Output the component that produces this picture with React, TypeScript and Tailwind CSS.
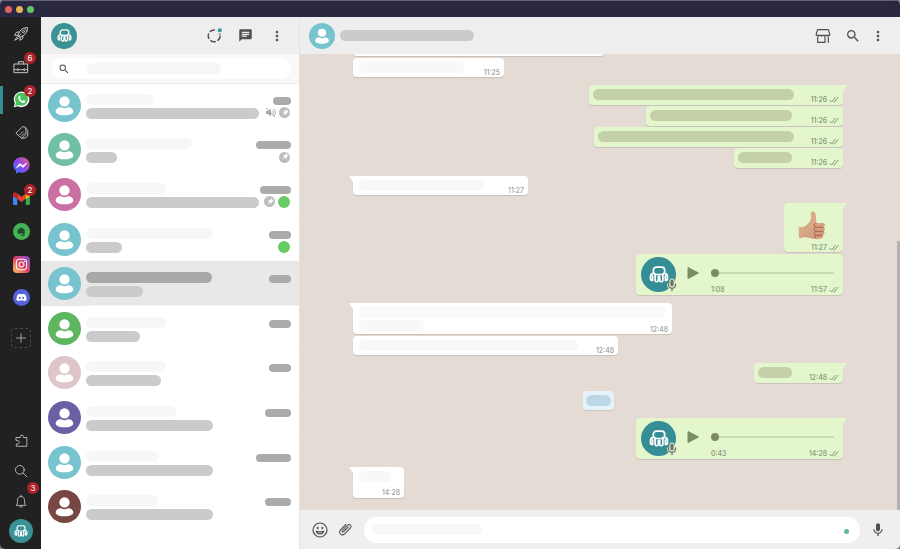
import type { ReactNode } from "react";
import { MdChat, MdMic, MdMoreVert, MdPushPin, MdSearch } from "react-icons/md";
import { FaDiscord, FaEvernote, FaFacebookMessenger, FaInstagram } from "react-icons/fa";

function Octopus({ className }: { className: string }) {
  return (
    <svg viewBox="0 0 28 24" className={className} fill="none" stroke="currentColor" strokeWidth="2.400" strokeLinecap="round" strokeLinejoin="round" aria-hidden="true">
      <rect x="6" y="1.500" width="16" height="10.500" rx="4.500" />
      <path d="M8.500 12v8c0 3 4.500 3 4.500 0v-5.500h2V20c0 3 4.500 3 4.500 0v-8" />
      <path d="M5.500 10.500C3.500 11 2 12.500 2 15v2.500c0 2 1.500 3 3 3V14M22.500 10.500c2 .5 3.500 2 3.500 4.500v2.500c0 2-1.500 3-3 3V14" />
    </svg>
  );
}

function Person({ className }: { className: string }) {
  return (
    <svg viewBox="0 0 32 32" className={className} aria-hidden="true">
      <circle cx="16" cy="16" r="16" fill="currentColor" />
      <circle cx="16" cy="12" r="5" fill="#fff" />
      <path d="M7.500 21.700c0-2.600 3-4.200 5.200-4 2 1.400 4.600 1.400 6.600 0 2.200-.2 5.200 1.400 5.200 4 0 5-17 5-17 0Z" fill="#fff" />
    </svg>
  );
}

function Line({ children, className = "size-4" }: { children: ReactNode; className?: string }) {
  return (
    <svg viewBox="0 0 24 24" className={className} fill="none" stroke="currentColor" strokeWidth="1.5" strokeLinecap="round" strokeLinejoin="round" aria-hidden="true">
      {children}
    </svg>
  );
}

type App = { name: string; icon: ReactNode; count?: number; active?: boolean };

const apps: App[] = [
  {
    name: "Launch",
    icon: (
      <Line>
        <path d="M21.500 2.500c-5-.5-9 1.500-12 6.500l-2 5 3 3 5-2.500c4.500-3 6.500-7 6-12Z" />
        <path d="M9.500 9 5 9.500 2.500 14l5 0M15 14.500l-.5 4.500-4 2.500v-4.500M6 16.500l-3.500 5L8 18.500M12 12l-5 5M17 4l3.500 3.500" />
        <circle cx="15.500" cy="8.500" r="1.800" />
      </Line>
    ),
  },
  {
    name: "Work",
    count: 6,
    icon: (
      <Line>
        <path d="M2 7.500h20v13H2zM8 7.500V4h8v3.500M2 16h4M9 16h6M18 16h4M6.500 14.500 9 16l-2.500 1.500M17.500 14.500 15 16l2.500 1.500" />
      </Line>
    ),
  },
  {
    name: "WhatsApp",
    count: 2,
    active: true,
    icon: (
      <svg viewBox="0 0 24 24" className="size-[17px]" aria-hidden="true">
        <path d="M1 23l1.600-5.800A11 11 0 1 1 7 21.500Z" fill="#fff" />
        <path d="M3 21l1.200-4.400A9.200 9.200 0 1 1 7.600 19.700Z" fill="#4cc35a" />
        <path d="M8.200 7c.7-.7 1.400-.6 1.700.2l.7 1.600c.2.700-.9 1.500-.8 1.800.7 1.600 2 2.800 3.700 3.500.5.100 1.200-1.300 1.800-1.100l1.800.9c.7.400.2 1.800-.5 2.400-3.600 2.700-11.200-4.500-8.400-9.300Z" fill="#fff" />
      </svg>
    ),
  },
  {
    name: "Tags",
    icon: (
      <Line className="size-[15px]">
        <path d="M13.500 3 3 13l9.500 8.500L19 15V4.500Z" />
        <path d="M19 5.500 22 9v8.500L17.500 21h-5M9.500 15.500l5-5M12 18l4.500-4.500" />
      </Line>
    ),
  },
  {
    name: "Messenger",
    icon: (
      <span className="relative flex size-[17px] items-center justify-center">
        <svg viewBox="0 0 24 24" className="absolute size-[17px]" aria-hidden="true">
          <defs>
            <linearGradient id="messenger" x1="0" y1="1" x2="1" y2="0">
              <stop offset="0" stopColor="#2585f5" />
              <stop offset=".5" stopColor="#8a45ee" />
              <stop offset="1" stopColor="#f4627a" />
            </linearGradient>
          </defs>
          <path d="M12 .5C5.500.5.500 5.200.500 11.500c0 3.500 1.500 6 3.700 8v4l3.500-1.800c1.400.4 2.800.6 4.300.6 6.500 0 11.500-4.700 11.500-11S18.500.5 12 .5Z" fill="url(#messenger)" />
          <path d="m5 15 4.500-6 4 3 5.500-3.200-4.500 6-4-3Z" fill="#fff" stroke="#fff" strokeLinejoin="round" />
        </svg>
      </span>
    ),
  },
  {
    name: "Gmail",
    count: 2,
    icon: (
      <svg viewBox="0 0 24 18" className="w-[17px] h-[13px]" aria-hidden="true">
        <path d="M0 3v13.500c0 .8.600 1.500 1.500 1.500H6V7Z" fill="#4285f4" />
        <path d="M24 3v13.500c0 .8-.6 1.500-1.500 1.500H18V7Z" fill="#34a853" />
        <path d="M6 9.500V2l6 4.500L18 2v7.500L12 14Z" fill="#ea4335" />
        <path d="M0 3v2.500l6 4.500V2L4 .6C2.300-.6 0 .6 0 3Z" fill="#c5221f" />
        <path d="M24 3v2.500L18 10V2l2-1.400C21.700-.6 24 .6 24 3Z" fill="#fbbc04" />
      </svg>
    ),
  },
  {
    name: "Evernote",
    icon: (
      <span className="flex size-[17px] items-center justify-center rounded-full bg-[#45b455] text-[#1f4a2a]">
        <FaEvernote className="size-[10px]" />
      </span>
    ),
  },
  {
    name: "Instagram",
    icon: (
      <span className="flex size-[17px] items-center justify-center rounded-[4px] bg-linear-to-tr from-[#fdc04d] via-[#e43b63] to-[#7a3fd0] text-white">
        <FaInstagram className="size-[13px]" />
      </span>
    ),
  },
  {
    name: "Discord",
    icon: (
      <span className="flex size-[17px] items-center justify-center rounded-full bg-[#5561dd] text-white">
        <FaDiscord className="size-[11px]" />
      </span>
    ),
  },
];

function Badge({ count, className }: { count: number; className: string }) {
  return (
    <span className={`absolute flex size-3 items-center justify-center rounded-full bg-[#ae2328] text-[8px] leading-none text-white ${className}`}>
      {count}
    </span>
  );
}

function Sidebar() {
  return (
    <nav className="flex w-[41px] shrink-0 flex-col items-center bg-[#212121] pb-[3px] text-[#c4c4c4]">
      {apps.map((app) => (
        <button key={app.name} aria-label={app.name} className="relative flex h-[33px] w-full items-center justify-center pl-px">
          {app.active && <span className="absolute left-0 h-7 w-[3px] bg-[#368f94]" />}
          {app.icon}
          {app.count && <Badge count={app.count} className="right-[5px] top-[2px]" />}
        </button>
      ))}
      <button aria-label="Add app" className="mt-[14px] flex size-5 items-center justify-center rounded-sm border border-dashed border-[#4a4a4a]">
        <Line className="size-3"><path d="M12 3v18M3 12h18" /></Line>
      </button>
      <div className="mt-auto flex w-full flex-col">
        <button aria-label="Extensions" className="flex h-[30px] items-center justify-center">
          <Line className="size-[14px]">
            <path d="M4 6h7V4c0-3 5-3 5 0v2h6v15H4v-4h2c4 0 4-6 0-6H4Z" />
          </Line>
        </button>
        <button aria-label="Search apps" className="flex h-[30px] items-center justify-center">
          <Line className="size-[14px]"><circle cx="10" cy="10" r="7.500" /><path d="m15.500 15.500 6.500 6.500" /></Line>
        </button>
        <button aria-label="Notifications" className="relative flex h-[30px] items-center justify-center">
          <Line className="size-[14px]">
            <path d="M12 2v2M4 19c2-2 2-4 2-8 0-9 12-9 12 0 0 4 0 6 2 8ZM10 22h4" />
          </Line>
          <Badge count={3} className="-top-1 right-[2px]" />
        </button>
        <button aria-label="Profile" className="flex h-[30px] items-center justify-center">
          <span className="flex size-6 items-center justify-center rounded-full bg-[#3a9196] text-white">
            <Octopus className="w-[14px] h-3" />
          </span>
        </button>
      </div>
    </nav>
  );
}

type Chat = {
  color: string;
  name: string;
  preview: string;
  time: string;
  icons?: ("mute" | "pin" | "unread")[];
  selected?: boolean;
};

const chats: Chat[] = [
  { color: "text-[#77c3ce]", name: "w-[68px]", preview: "w-[173px]", time: "w-[18px]", icons: ["mute", "pin"] },
  { color: "text-[#71c0a4]", name: "w-[106px]", preview: "w-[31px]", time: "w-[35px]", icons: ["pin"] },
  { color: "text-[#c970a5]", name: "w-[80px]", preview: "w-[173px]", time: "w-[31px]", icons: ["pin", "unread"] },
  { color: "text-[#77c3ce]", name: "w-[126px]", preview: "w-[36px]", time: "w-[22px]", icons: ["unread"] },
  { color: "text-[#77c3ce]", name: "w-[126px]", preview: "w-[57px]", time: "w-[22px]", selected: true },
  { color: "text-[#5eb660]", name: "w-[80px]", preview: "w-[54px]", time: "w-[22px]" },
  { color: "text-[#dec5c8]", name: "w-[80px]", preview: "w-[75px]", time: "w-[22px]" },
  { color: "text-[#6d5fa6]", name: "w-[90px]", preview: "w-[127px]", time: "w-[26px]" },
  { color: "text-[#77c3ce]", name: "w-[72px]", preview: "w-[127px]", time: "w-[35px]" },
  { color: "text-[#774843]", name: "w-[72px]", preview: "w-[127px]", time: "w-[26px]" },
];

function StatusIcon({ kind }: { kind: "mute" | "pin" | "unread" }) {
  if (kind === "mute") {
    return (
      <svg viewBox="0 0 22 22" className="size-[11px] text-[#a8a8a8]" fill="none" stroke="currentColor" strokeWidth="2" aria-hidden="true">
        <path d="M2 8h4l6-5v16l-6-5H2Z" fill="currentColor" stroke="none" />
        <path d="M2 2l18 18M15 7c2 2.500 2 5.500 0 8M17.500 3.500c4 4.500 4 10.500 0 15" />
      </svg>
    );
  }
  if (kind === "unread") return <span className="size-3 rounded-full bg-[#68cc65]" />;
  return (
    <span className="flex size-[11px] items-center justify-center rounded-full bg-[#bdbdbd] text-white">
      <MdPushPin className="size-2 rotate-45" />
    </span>
  );
}

function ChatRow({ chat }: { chat: Chat }) {
  return (
    <li className="min-h-0">
      <button aria-label="Open chat" className={`flex h-full w-full items-center pl-[7px] ${chat.selected ? "bg-[#e8e8e8]" : ""}`}>
        <Person className={`size-[33px] shrink-0 ${chat.color}`} />
        <span className="ml-[5px] flex h-full flex-1 items-center justify-between border-b border-[#f8f8f8]/60 pr-2">
          <span className="flex flex-col gap-[3px] pt-[3px]">
            <span className={`h-[11px] rounded-full ${chat.name} ${chat.selected ? "bg-[#a9a9a9]" : "bg-[#f7f7f7]"}`} />
            <span className={`h-[11px] rounded-full bg-[#cbcbcb] ${chat.preview}`} />
          </span>
          <span className="flex h-6 flex-col items-end gap-[2px] pt-[4px]">
            <span className={`h-2 shrink-0 rounded-full bg-[#ababab] ${chat.time}`} />
            <span className="flex h-3 shrink-0 items-center gap-[3px] pr-px">
              {chat.icons?.map((kind) => <StatusIcon key={kind} kind={kind} />)}
            </span>
          </span>
        </span>
      </button>
    </li>
  );
}

function ChatList() {
  return (
    <aside className="flex w-[259px] shrink-0 flex-col border-r border-[#e2e2e2] bg-white">
      <header className="flex h-[37px] shrink-0 items-center bg-[#eeeeee] pl-[10px] pr-[14px] text-[#505050]">
        <button aria-label="My profile" className="flex size-[26px] items-center justify-center rounded-full bg-[#3a9196] text-white">
          <Octopus className="w-[15px] h-[13px]" />
        </button>
        <div className="ml-auto flex items-center gap-4">
          <button aria-label="Status">
            <svg viewBox="0 0 24 24" className="size-[15px]" fill="none" aria-hidden="true">
              <circle cx="11.500" cy="12.500" r="9.500" stroke="currentColor" strokeWidth="2.400" strokeDasharray="9 2.940" />
              <circle cx="20" cy="4" r="5" fill="#eee" />
              <circle cx="20.500" cy="3.500" r="3.200" fill="#2c9c92" />
            </svg>
          </button>
          <button aria-label="New chat"><MdChat className="size-[15px]" /></button>
          <button aria-label="Menu"><MdMoreVert className="size-4" /></button>
        </div>
      </header>
      <div className="flex h-[30px] shrink-0 items-center border-b border-[#ececec] bg-[#f8f8f8] pl-[10px] pr-2">
        <label className="flex h-[21px] min-w-0 flex-1 items-center rounded-full bg-white pl-[7px]">
          <MdSearch className="size-3 shrink-0 text-[#4b4b4b]" />
          <span className="ml-4 h-[11px] w-[135px] shrink-0 rounded-full bg-[#f6f6f6]" />
          <input aria-label="Search chats" className="w-0 min-w-0 flex-1 bg-transparent text-[8px] outline-none" />
        </label>
      </div>
      <ul className="-mt-px grid h-[446px] shrink-0 auto-rows-fr">
        {chats.map((chat, index) => <ChatRow key={index} chat={chat} />)}
      </ul>
    </aside>
  );
}

function Meta({ time, out }: { time: string; out?: boolean }) {
  return (
    <span className={`flex h-[9px] items-center gap-[2px] text-[7px] leading-[9px] ${out ? "text-[#72806a]" : "text-[#8c8c8c]"}`}>
      <time>{time}</time>
      {out && (
        <svg viewBox="0 0 20 14" className="w-[10px] h-[7px]" fill="none" stroke="currentColor" strokeWidth="1.600" aria-label="Delivered">
          <path d="m1 8 4 4 8-10M9 11l1.500 1.500 8-10.500" />
        </svg>
      )}
    </span>
  );
}

function Bubble({ out, tail, className, children }: { out?: boolean; tail?: boolean; className: string; children: ReactNode }) {
  const side = out ? "self-end bg-[#e4f6cc]" : "self-start bg-white";
  const tailSide = out
    ? "left-full bg-[#e4f6cc] [clip-path:polygon(0_0,100%_0,0_100%)]"
    : "right-full bg-white [clip-path:polygon(0_0,100%_0,100%_100%)]";
  const corner = tail ? (out ? "rounded-tr-none" : "rounded-tl-none") : "";
  return (
    <div className={`relative flex shrink-0 rounded-[4px] shadow-[0_1px_1px_rgba(0,0,0,0.13)] ${side} ${corner} ${className}`}>
      {tail && <span className={`absolute top-0 h-[6px] w-1 ${tailSide}`} />}
      {children}
    </div>
  );
}

function Incoming({ time, width, bar, tail }: { time: string; width: string; bar: string; tail?: boolean }) {
  return (
    <Bubble tail={tail} className={`h-[19px] justify-between pl-[6px] pr-1 pt-1 ${width}`}>
      <span className={`h-[11px] rounded-full bg-[#f8f8f8] ${bar}`} />
      <span className="self-end"><Meta time={time} /></span>
    </Bubble>
  );
}

function Outgoing({ time, width, bar, tail }: { time: string; width: string; bar: string; tail?: boolean }) {
  return (
    <Bubble out tail={tail} className={`h-5 justify-between pl-1 pr-1 pt-1 ${width}`}>
      <span className={`h-[11px] rounded-full bg-[#c4d0aa] ${bar}`} />
      <span className="self-end pb-px"><Meta time={time} out /></span>
    </Bubble>
  );
}

function Voice({ length, time, tail }: { length: string; time: string; tail?: boolean }) {
  return (
    <Bubble out tail={tail} className="h-[41px] w-[207px] items-center pl-[5px] pr-1">
      <span className="relative flex size-[35px] shrink-0 items-center justify-center rounded-full bg-[#358d95] text-white">
        <Octopus className="w-5 h-[17px]" />
        <svg viewBox="0 0 14 20" className="absolute -right-px bottom-0 h-[14px] w-[10px]" fill="none" aria-hidden="true">
          <path d="M2 8v2c0 6 10 6 10 0V8M7 15v4" stroke="#d9e8cd" strokeWidth="4" />
          <rect x="4" y="1.500" width="6" height="11" rx="3" fill="#6f7166" stroke="#d9e8cd" strokeWidth="1.500" />
          <path d="M2 8v2c0 6 10 6 10 0V8M7 15v4" stroke="#6f7166" strokeWidth="1.600" />
        </svg>
      </span>
      <button aria-label="Play" className="ml-[11px] pb-[3px] text-[#7b8c67]">
        <svg viewBox="0 0 12 12" className="size-3" aria-hidden="true"><path d="M1 .5 11.500 6 1 11.500Z" fill="currentColor" stroke="currentColor" strokeLinejoin="round" /></svg>
      </button>
      <div className="ml-3 flex h-full min-w-0 flex-1 flex-col justify-between pb-px pt-[15px]">
        <div className="flex h-2 items-center pr-[5px]">
          <input
            type="range"
            defaultValue={0}
            aria-label="Playback position"
            className="h-2 w-full min-w-0 appearance-none bg-transparent [&::-webkit-slider-runnable-track]:h-[2px] [&::-webkit-slider-runnable-track]:rounded-full [&::-webkit-slider-runnable-track]:bg-[#c9d9b3] [&::-webkit-slider-thumb]:-mt-[3px] [&::-webkit-slider-thumb]:size-2 [&::-webkit-slider-thumb]:appearance-none [&::-webkit-slider-thumb]:rounded-full [&::-webkit-slider-thumb]:bg-[#7b8c67]"
          />
        </div>
        <div className="flex justify-between">
          <span className="text-[7px] leading-[9px] text-[#72806a]">{length}</span>
          <Meta time={time} out />
        </div>
      </div>
    </Bubble>
  );
}

function ThumbsUp() {
  return (
    <svg viewBox="0 0 28 30" className="w-7 h-[30px]" role="img" aria-label="Thumbs up">
      <defs>
        <linearGradient id="skin" x1="0" y1="0" x2="1" y2="1">
          <stop offset="0" stopColor="#dfb88f" />
          <stop offset="1" stopColor="#d09478" />
        </linearGradient>
      </defs>
      <path d="M1 16c2.500.3 5-.2 7-1.500 3-2 4.600-5 5-8 .1-1.500-.2-3-.2-4.200 0-2.300 3.800-2.600 4.600.2.900 3.500.9 6.500.2 9.700l7-.2c2.800 0 3 3.500.6 4 2.400.4 2.200 3.900 0 4.100 1.900.6 1.600 3.700-.6 3.900 1.200 1.200.4 3.200-1.800 3.400-4.500.7-8 .6-11-.4-3-1-6-.8-10.300.4C.6 24.500.4 20 1 16Z" fill="url(#skin)" />
      <path d="M25 16.300h-7M25 20.400h-7M24 24.300h-6M18.500 12c-3 .3-3.300 3.800-.5 4.300-2.500.6-2.500 3.500 0 4.100-2 .6-2 3.300 0 3.900-1.500.7-1.400 2.700 0 3.300" fill="none" stroke="#a55f4a" strokeWidth=".9" strokeLinecap="round" />
    </svg>
  );
}

function Conversation() {
  return (
    <main className="flex min-w-0 flex-1 flex-col">
      <header className="flex h-[37px] shrink-0 items-center bg-[#eeeeee] pl-[9px] pr-[14px] text-[#505050]">
        <Person className="size-[26px] text-[#77c3ce]" />
        <span className="ml-[5px] h-[11px] w-[134px] rounded-full bg-[#cbcbcb]" />
        <div className="ml-auto flex items-center">
          <button aria-label="Catalog">
            <Line className="size-4">
              <path d="M4 2.500h16l2 6V11H2V8.500ZM4 14v7.500h11V14M20 14v7.500" strokeWidth="1.800" />
              <path d="M2.500 11c1 2 4 2 5 0 1 2 3.500 2 4.500 0 1 2 3.500 2 4.500 0 1 2 4 2 5 0" />
            </Line>
          </button>
          <button aria-label="Search messages" className="ml-[14px]"><MdSearch className="size-4" /></button>
          <button aria-label="Chat menu" className="ml-[9px]"><MdMoreVert className="size-4" /></button>
        </div>
      </header>
      <section aria-label="Messages" className="relative flex min-h-0 flex-1 flex-col justify-end gap-2 overflow-hidden bg-[#e4dcd4] pb-3 pl-[53px] pr-[57px]">
        <div className="flex flex-col gap-[2px]">
          <Bubble className="h-[19px] w-[251px]"><span /></Bubble>
          <Incoming time="11:25" width="w-[151px]" bar="w-[106px]" />
        </div>
        <div className="flex flex-col gap-px">
          <Outgoing time="11:26" width="w-[254px]" bar="w-[201px]" tail />
          <Outgoing time="11:26" width="w-[197px]" bar="w-[142px]" />
          <Outgoing time="11:26" width="w-[249px]" bar="w-[196px]" />
          <Outgoing time="11:26" width="w-[109px]" bar="w-[54px]" />
        </div>
        <Incoming time="11:27" width="w-[175px]" bar="w-[125px]" tail />
        <div className="flex flex-col gap-[2px]">
          <Bubble out tail className="h-[49px] w-[59px] flex-col items-center justify-between pr-1 pt-2">
            <ThumbsUp />
            <span className="self-end"><Meta time="11:27" out /></span>
          </Bubble>
          <Voice length="1:08" time="11:57" />
        </div>
        <div className="flex flex-col gap-[2px]">
          <Bubble tail className="h-[31px] w-[319px] flex-col pl-[6px] pr-1 pt-[3px]">
            <span className="h-3 w-[307px] rounded-full bg-[#f8f9f9]" />
            <span className="flex flex-1 justify-between pt-[2px]">
              <span className="h-[11px] w-[65px] rounded-full bg-[#f8f8f8]" />
              <span className="self-end"><Meta time="12:48" /></span>
            </span>
          </Bubble>
          <Incoming time="12:48" width="w-[265px]" bar="w-[219px]" />
        </div>
        <Outgoing time="12:48" width="w-[89px]" bar="w-[34px]" tail />
        <div className="flex h-[19px] w-[31px] shrink-0 items-center justify-center self-center rounded-[4px] bg-[#e6f2f9] shadow-[0_1px_1px_rgba(0,0,0,0.1)]">
          <span className="h-[11px] w-[25px] rounded-full bg-[#bcd8e7]" />
        </div>
        <Voice length="0:43" time="14:28" tail />
        <Bubble tail className="h-[31px] w-[51px] flex-col justify-between pl-[6px] pr-1 pt-1 pb-px">
          <span className="h-[11px] w-8 rounded-full bg-[#f8f8f8]" />
          <span className="self-end"><Meta time="14:28" /></span>
        </Bubble>
        <span className="absolute bottom-0 right-0 h-[59%] w-[3px] bg-[#b8b1ad]" />
      </section>
      <footer className="flex h-[39px] shrink-0 items-center bg-[#efefef] pl-3 pr-[14px] text-[#505050]">
        <button aria-label="Emoji">
          <Line className="size-4">
            <g strokeWidth="1.800">
              <circle cx="12" cy="12" r="10.500" />
              <path d="M8.500 8.500v1M15.500 8.500v1" strokeWidth="2.800" />
              <path d="M6.500 14c2 1 9 1 11 0-1 5-10 5-11 0Z" />
            </g>
          </Line>
        </button>
        <button aria-label="Attach" className="ml-[10px]">
          <Line className="size-[15px]">
            <path strokeWidth="1.700" d="m16.500 8-7.500 7.500c-1.500 1.500-3.500-.5-2-2l8.500-8.500c3-3 7.500 1.500 4.500 4.500L10.500 19c-4.500 4.500-11-2-6.500-6.500l8.500-8.500" />
          </Line>
        </button>
        <label className="ml-[11px] flex h-[26px] min-w-0 flex-1 items-center rounded-full bg-white pl-2 pr-[11px]">
          <span className="h-[11px] w-[110px] rounded-full bg-[#f8f8f8]" />
          <input aria-label="Message" className="min-w-0 flex-1 bg-transparent text-[8px] outline-none" />
          <span className="mt-1 size-[5px] rounded-full bg-[#5fb79d]" />
        </label>
        <button aria-label="Record voice message" className="ml-[10px]"><MdMic className="size-4" /></button>
      </footer>
    </main>
  );
}

export default function App() {
  return (
    <div className="h-screen bg-[#85848c] font-[Inter,'Liberation_Sans',sans-serif]">
      <div className="flex h-full flex-col overflow-hidden rounded-[5px]">
        <div className="flex h-[17px] shrink-0 items-center gap-1 border-t border-[#65647a] bg-[#2a2741] pl-[5px]">
          <button aria-label="Close" className="size-[7px] rounded-full bg-[#df6260]" />
          <button aria-label="Minimize" className="size-[7px] rounded-full bg-[#e6b450]" />
          <button aria-label="Zoom" className="size-[7px] rounded-full bg-[#62c462]" />
        </div>
        <div className="flex min-h-0 flex-1">
          <Sidebar />
          <ChatList />
          <Conversation />
        </div>
      </div>
    </div>
  );
}
